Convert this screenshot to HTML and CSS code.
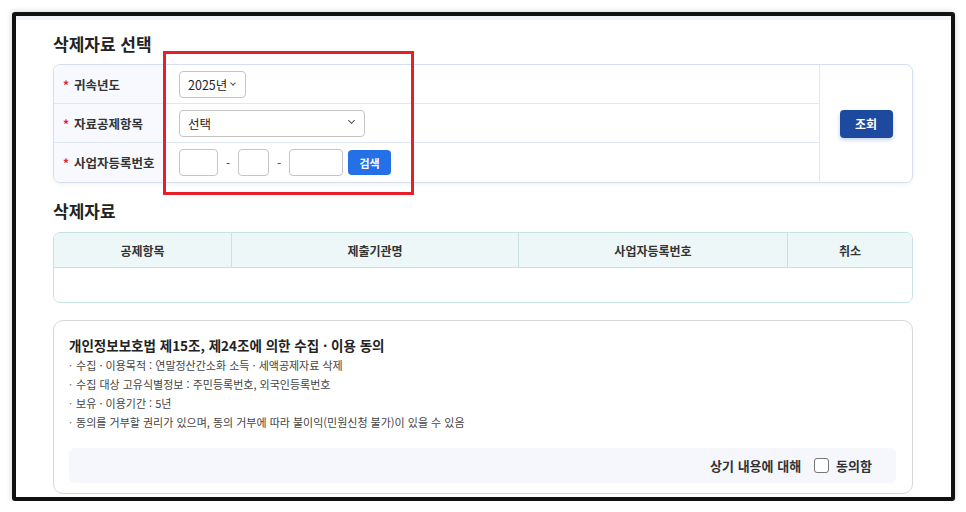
FILE: index.html
```html
<!DOCTYPE html>
<html lang="ko">
<head>
  <meta charset="UTF-8">
  <title>삭제자료 선택</title>
  <link rel="stylesheet" href="styles.css">
</head>
<body>
  <div class="frame">
    <div class="page">
      <h2 class="title">삭제자료 선택</h2>

      <div class="search-box">
        <div class="rows">
          <div class="row">
            <div class="label"><span class="req">*</span>귀속년도</div>
            <div class="field">
              <div class="select year">2025년 <span class="caret small"></span></div>
            </div>
          </div>
          <div class="row">
            <div class="label"><span class="req">*</span>자료공제항목</div>
            <div class="field">
              <div class="select wide">선택 <span class="caret"></span></div>
            </div>
          </div>
          <div class="row">
            <div class="label"><span class="req">*</span>사업자등록번호</div>
            <div class="field">
              <input class="biz n1" type="text">
              <span class="dash">-</span>
              <input class="biz n2" type="text">
              <span class="dash">-</span>
              <input class="biz n3" type="text">
              <button class="btn-find">검색</button>
            </div>
          </div>
        </div>
        <div class="action">
          <button class="btn-query">조회</button>
        </div>
        <div class="marker"></div>
      </div>

      <h2 class="title second">삭제자료</h2>

      <div class="table">
        <div class="th c1">공제항목</div>
        <div class="th c2">제출기관명</div>
        <div class="th c3">사업자등록번호</div>
        <div class="th c4">취소</div>
        <div class="empty"></div>
      </div>

      <div class="consent">
        <h3>개인정보보호법 제15조, 제24조에 의한 수집 · 이용 동의</h3>
        <ul>
          <li>수집 · 이용목적 : 연말정산간소화 소득 · 세액공제자료 삭제</li>
          <li>수집 대상 고유식별정보 : 주민등록번호, 외국인등록번호</li>
          <li>보유 · 이용기간 : 5년</li>
          <li>동의를 거부할 권리가 있으며, 동의 거부에 따라 불이익(민원신청 불가)이 있을 수 있음</li>
        </ul>
        <div class="agree">
          <span>상기 내용에 대해</span>
          <span class="check"></span>
          <span>동의함</span>
        </div>
      </div>
    </div>
  </div>
</body>
</html>
```

FILE: styles.css
```css
* {
  box-sizing: border-box;
}

body {
  margin: 0;
  background: #fff;
  font-family: "Noto Sans CJK KR", "Noto Sans", sans-serif;
  color: #222;
}

.frame {
  margin: 12px 0 0 12px;
  width: 943px;
  height: 489px;
  border: 4px solid #111;
  border-radius: 3px;
  overflow: hidden;
  box-shadow: 0 0 6px rgba(0, 0, 0, 0.18);
}

.page {
  height: 100%;
  padding: 12px 38px 0 37px;
  background: #fff;
  border-top: 4px solid #f2f4f7;
}

.title {
  margin: 0;
  font-size: 17px;
  line-height: 24px;
  font-weight: 700;
  color: #222;
}

.title.second {
  margin-top: 16px;
}

/* search form */
.search-box {
  position: relative;
  display: flex;
  margin-top: 8px;
  border: 1px solid #d5dff2;
  border-radius: 7px;
  box-shadow: 0 2px 4px rgba(0, 0, 0, 0.05);
}

.rows {
  flex: 1;
}

.row {
  display: flex;
  height: 39px;
  border-bottom: 1px solid #dfe6f5;
}

.row:last-child {
  border-bottom: none;
}

.label {
  width: 110px;
  padding-left: 9px;
  display: flex;
  align-items: center;
  background: #f7f9fe;
  font-size: 12.5px;
  font-weight: 700;
  color: #333;
}

.row:first-child .label {
  border-top-left-radius: 6px;
}

.row:last-child .label {
  border-bottom-left-radius: 6px;
}

.req {
  color: #e0223a;
  margin-right: 5px;
  font-size: 12px;
}

.field {
  flex: 1;
  display: flex;
  align-items: center;
  padding-left: 15px;
}

.select {
  height: 27px;
  border: 1px solid #c4c4c4;
  border-radius: 4px;
  display: flex;
  align-items: center;
  padding-left: 8px;
  font-size: 12.5px;
  color: #222;
}

.select.year {
  width: 67px;
}

.select.wide {
  width: 186px;
  position: relative;
}

.select.wide .caret {
  position: absolute;
  right: 10px;
  top: 10px;
}

.caret {
  width: 5px;
  height: 5px;
  border-right: 1px solid #555;
  border-bottom: 1px solid #555;
  transform: rotate(45deg);
  margin-left: 4px;
  margin-top: -3px;
}

.caret.small {
  width: 4px;
  height: 4px;
}

.biz {
  height: 27px;
  border: 1px solid #c4c4c4;
  border-radius: 4px;
  background: #fff;
  padding: 0;
  font: inherit;
}

.biz.n1 { width: 39px; }
.biz.n2 { width: 31px; }
.biz.n3 { width: 54px; }

.dash {
  width: 20px;
  text-align: center;
  font-size: 12px;
  color: #444;
}

.btn-find {
  margin-left: 5px;
  width: 43px;
  height: 25px;
  border: none;
  border-radius: 4px;
  background: #2470e6;
  color: #fff;
  font: inherit;
  font-size: 11px;
  font-weight: 700;
}

.action {
  width: 93px;
  border-left: 1px solid #dfe6f5;
  display: flex;
  align-items: center;
  justify-content: center;
}

.btn-query {
  width: 53px;
  height: 28px;
  border: none;
  border-radius: 4px;
  background: #1d4a9e;
  color: #fff;
  font: inherit;
  font-size: 12px;
  font-weight: 700;
  box-shadow: 0 2px 4px rgba(29, 74, 158, 0.25);
}

/* red highlight box drawn over the fields */
.marker {
  position: absolute;
  left: 109px;
  top: -14px;
  width: 251px;
  height: 144px;
  border: 3px solid #e81e28;
  pointer-events: none;
}

/* result table */
.table {
  display: grid;
  grid-template-columns: 178px 287px 269px 1fr;
  margin-top: 9px;
  border: 1px solid #c8e1e2;
  border-radius: 7px;
  overflow: hidden;
}

.th {
  height: 35px;
  display: flex;
  align-items: center;
  justify-content: center;
  background: #edf7f7;
  border-bottom: 1px solid #c8e1e2;
  border-right: 1px solid #c8e1e2;
  font-size: 12px;
  font-weight: 700;
  color: #333;
}

.th.c4 {
  border-right: none;
}

.empty {
  grid-column: 1 / 5;
  height: 34px;
}

/* consent notice */
.consent {
  margin-top: 17px;
  border: 1px solid #d8d8d8;
  border-radius: 10px;
  padding: 14px 16px 10px 15px;
}

.consent h3 {
  margin: 0;
  font-size: 13.5px;
  line-height: 20px;
  font-weight: 700;
  color: #222;
}

.consent ul {
  list-style: none;
  margin: 1px 0 0 0;
  padding: 0;
}

.consent li {
  font-size: 11px;
  line-height: 19px;
  color: #444;
}

.consent li::before {
  content: "·";
  margin-right: 4px;
  color: #777;
}

.agree {
  margin-top: 16px;
  height: 35px;
  border-radius: 6px;
  background: #f5f7fd;
  display: flex;
  align-items: center;
  justify-content: flex-end;
  padding-right: 24px;
  font-size: 13px;
  font-weight: 700;
  color: #333;
}

.check {
  width: 15px;
  height: 15px;
  border: 1px solid #777;
  border-radius: 3px;
  background: #fff;
  margin: 0 7px 0 13px;
}
```
